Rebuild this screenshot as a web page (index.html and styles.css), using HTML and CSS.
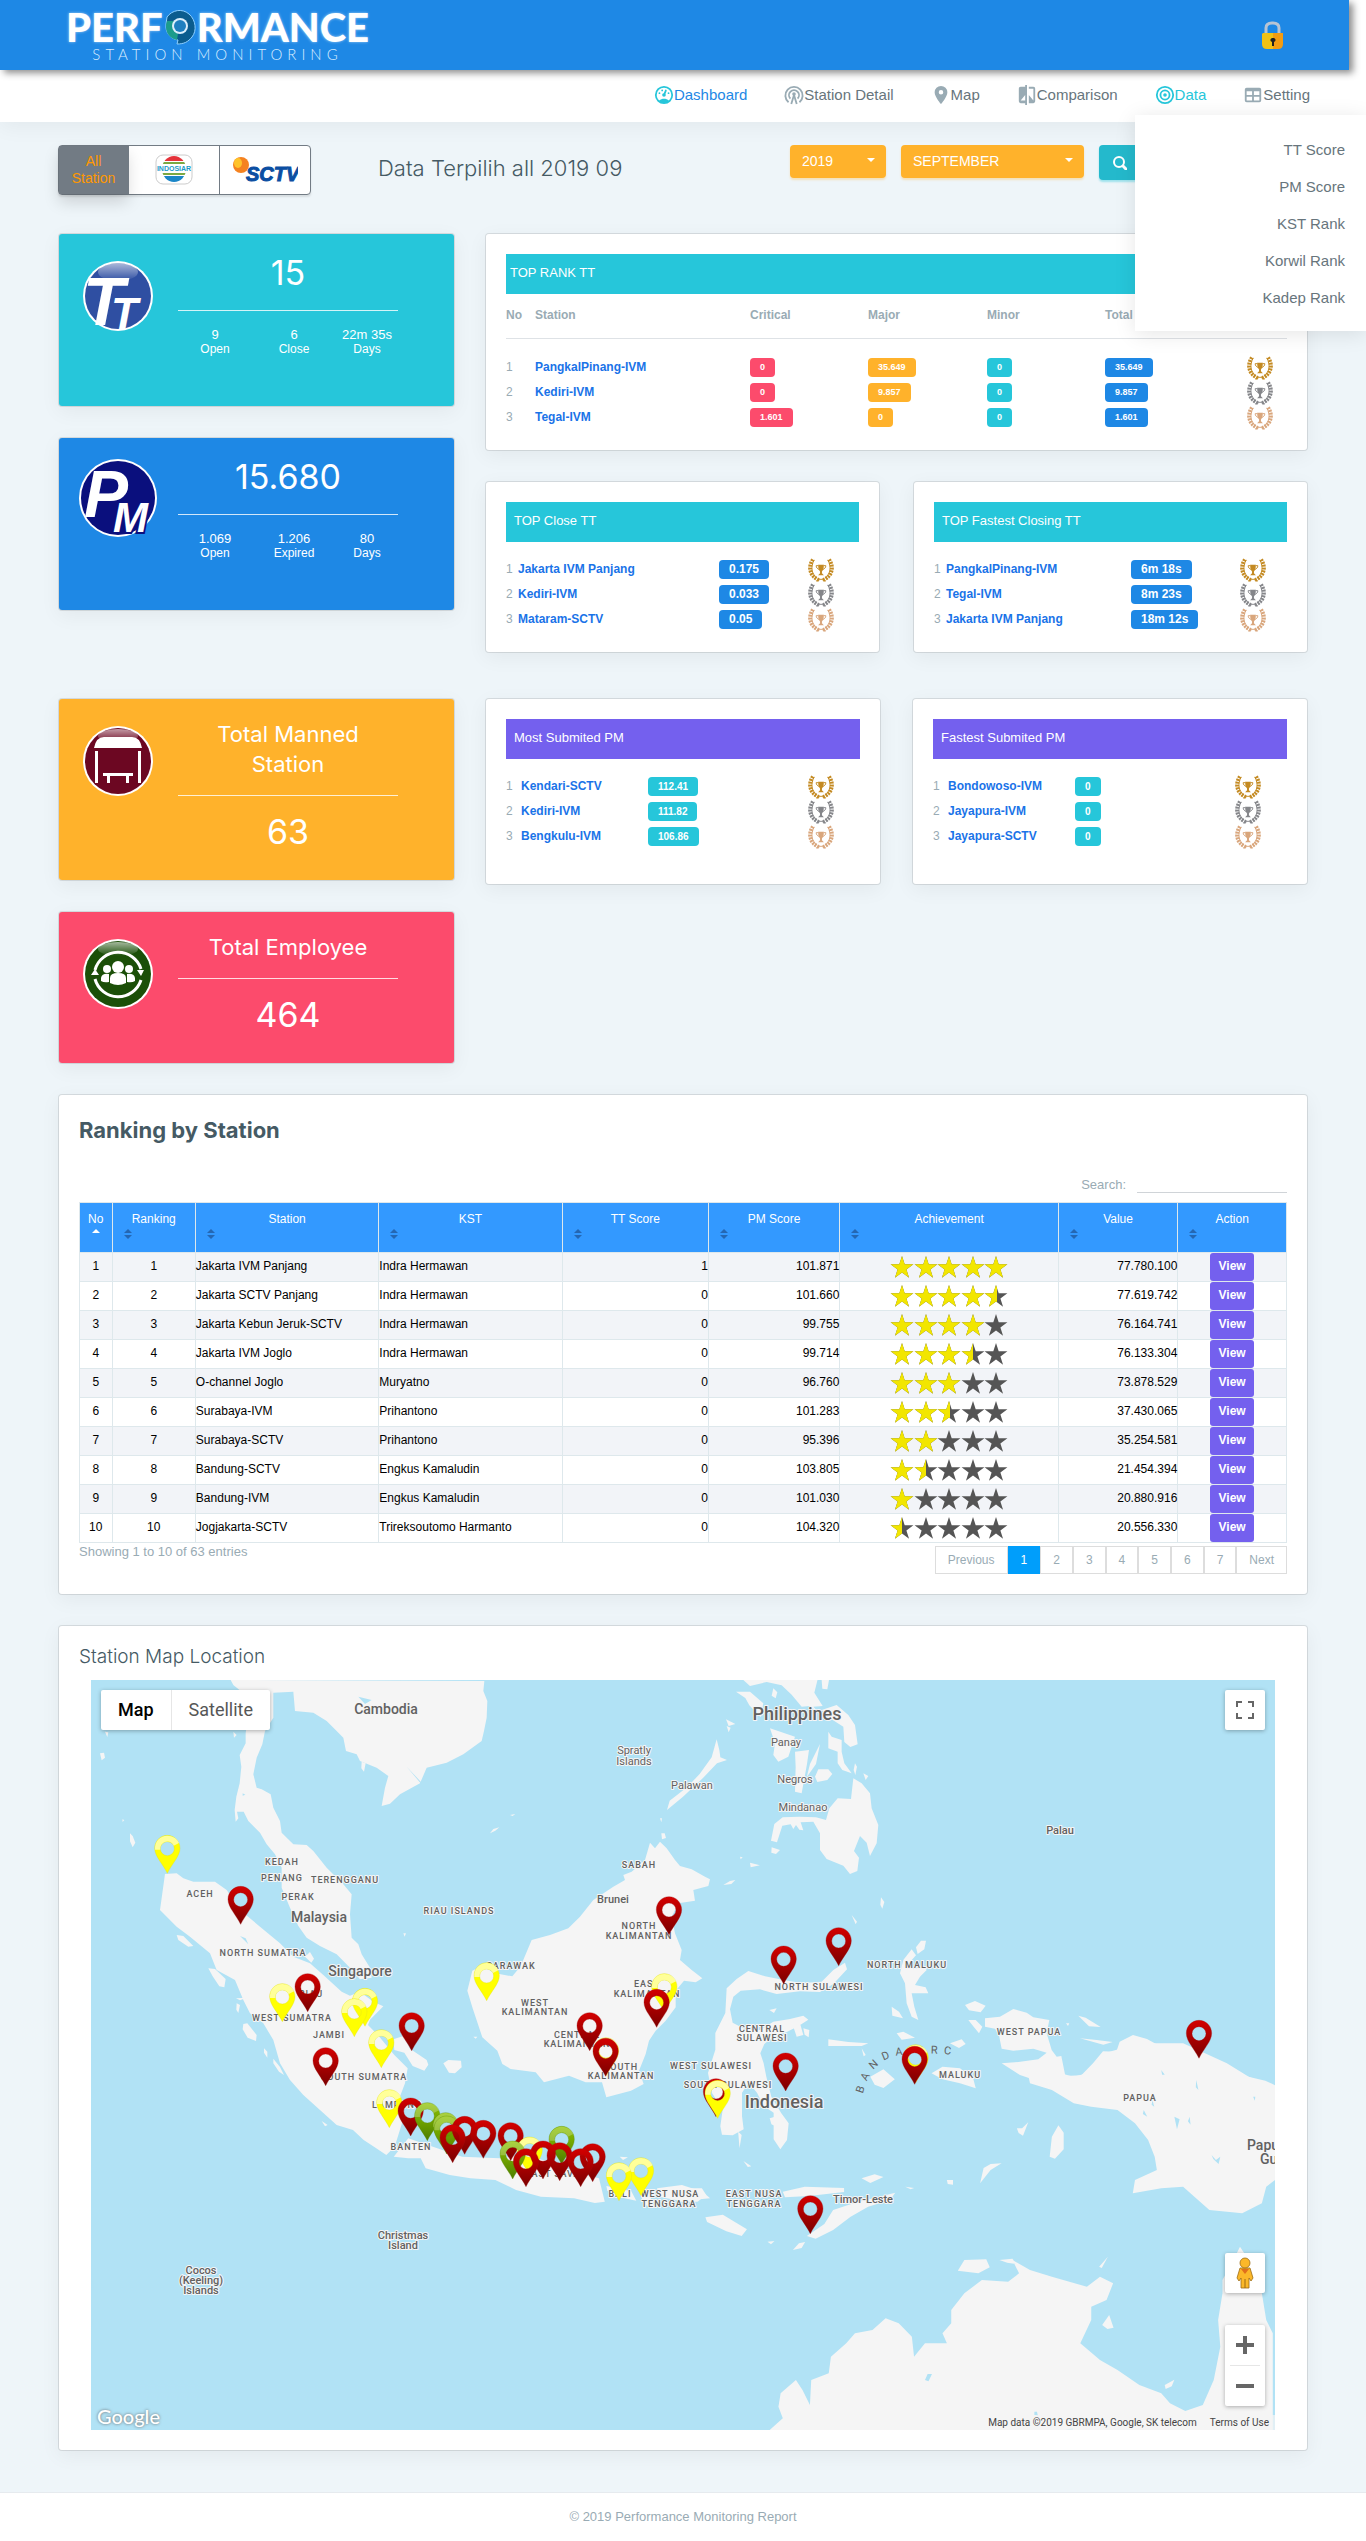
FILE: index.html
```html
<!DOCTYPE html>
<html lang="id">
<head>
<meta charset="utf-8">
<meta name="viewport" content="width=device-width, initial-scale=1">
<title>Performance Station Monitoring</title>
<link rel="stylesheet" href="styles.css">
</head>
<body>
<svg class="sprite" aria-hidden="true">
  <defs>
    <linearGradient id="pin-red-fill" x1="0" y1="0" x2="0" y2="1"><stop offset="0" stop-color="#d40000"/><stop offset="1" stop-color="#7a0000"/></linearGradient>
    <linearGradient id="pin-green-fill" x1="0" y1="0" x2="0" y2="1"><stop offset="0" stop-color="#8fc400"/><stop offset="1" stop-color="#4c7d00"/></linearGradient>
    <linearGradient id="gloss" x1="0" y1="0" x2="0" y2="1"><stop offset="0" stop-color="#fff" stop-opacity=".6"/><stop offset="1" stop-color="#fff" stop-opacity="0"/></linearGradient>
    <g id="pin-red"><path fill="url(#pin-red-fill)" fill-rule="evenodd" stroke="#a01010" d="M39 1C18 1 1 18 1 40c0 24 24 46 38 75 14-29 38-51 38-75C77 18 60 1 39 1zm0 19a21 21 0 1 1 0 42 21 21 0 0 1 0-42z"/></g>
    <g id="pin-green"><path fill="url(#pin-green-fill)" fill-rule="evenodd" stroke="#5c8a10" d="M39 1C18 1 1 18 1 40c0 24 24 46 38 75 14-29 38-51 38-75C77 18 60 1 39 1zm0 19a21 21 0 1 1 0 42 21 21 0 0 1 0-42z"/><path fill="#fff" fill-opacity=".25" d="M2 44C0 18 18 2 39 2c16 0 30 9 35 22L58 32C48 10 16 20 18 44z"/></g>
    <g id="pin-yellow"><path fill="#ff0" fill-rule="evenodd" stroke="#dede20" d="M39 1C18 1 1 18 1 40c0 24 24 46 38 75 14-29 38-51 38-75C77 18 60 1 39 1zm0 19a21 21 0 1 1 0 42 21 21 0 0 1 0-42z"/><path fill="#fff" fill-opacity=".6" d="M2 44C0 18 18 2 39 2c16 0 30 9 35 22L58 32C48 10 16 20 18 44z"/></g>
  </defs>
  <symbol id="medal" viewBox="0 0 28 26">
    <g fill="none" stroke="currentColor">
      <path stroke-width="4" stroke-dasharray="2 1" d="M12 24C2 20 0 10 6 2M16 24c10-4 12-14 6-22"/>
      <path stroke-width="1" d="M10 22C4 18 3 10 7 3M18 22c6-4 7-12 3-19M9 25l5-2 5 2"/>
      <path stroke-width="1" d="M11 9H9c0 2 1 3 3 4M17 9h2c0 2-1 3-3 4"/>
    </g>
    <path fill="currentColor" d="M11 8h6c0 4-1 6-2 7v2l2 2h-6l2-2v-2c-1-1-2-3-2-7z"/>
  </symbol>
  <symbol id="star" viewBox="-12 -12 24 22" overflow="visible"><path d="M0-12 2.700-3.700H11.400L4.400 1.400 7.050 9.700 0 4.600-7.050 9.700-4.400 1.400-11.400-3.700H-2.700z"/></symbol>
  <symbol id="stars" viewBox="0 0 118 22">
    <use href="#star" width="24" height="22"/><use href="#star" x="24" width="24" height="22"/><use href="#star" x="47" width="24" height="22"/><use href="#star" x="71" width="24" height="22"/><use href="#star" x="94" width="24" height="22"/>
  </symbol>
  <symbol id="sort" viewBox="0 0 8 10"><path d="M0 4l4-4 4 4zM0 6h8l-4 4z"/></symbol>
  <symbol id="sort-up" viewBox="0 0 8 10"><path d="M0 4l4-4 4 4z"/></symbol>
</svg>

<div class="top">
  <header class="header">
    <a class="logo" href="#">
      <span class="logo-main">PERF<svg class="logo-o" viewBox="0 0 32 36" aria-label="O"><path fill="#0b5c8e" stroke="#8fd0ff" d="M3 8C8 1 18-1 25 5c7 6 8 17 3 23-4 5-8 7-15 7l1-4C6 30 1 23 2 15z"/><path fill="#1c9c8c" d="M3 12C0 21 4 29 13 31l1-6C9 22 8 17 10 12z"/><circle cx="16" cy="17" r="8" fill="#dceffc"/><circle cx="16" cy="17" r="6" fill="#1f7fc0"/></svg>RMANCE</span>
      <span class="logo-sub">STATION MONITORING</span>
    </a>
    <button class="lock" type="button" aria-label="Lock"><svg viewBox="0 0 23 28"><path fill="none" stroke="#b8c4d4" stroke-width="3" d="M5 14V7q0-5 6-5h1q6 0 6 5v7"/><path fill="#f2c215" d="M2 12h10v16H6q-5 0-5-5V13z"/><path fill="#f39c12" d="M12 12h10v11q0 5-5 5h-5z"/><path fill="#222" d="M12 17a2 2 0 0 1 1 4v4h-2v-4a2 2 0 0 1 1-4z"/></svg></button>
  </header>
  <nav class="nav">
    <ul class="menu">
      <li><a class="is-current" href="#"><svg viewBox="1 1 22 22"><path d="M17.300,18C19,16.500 20,14.400 20,12A8,8 0 0,0 12,4A8,8 0 0,0 4,12C4,14.400 5,16.500 6.700,18C8.200,16.700 10,16 12,16C14,16 15.900,16.700 17.300,18M12,2A10,10 0 0,1 22,12A10,10 0 0,1 12,22A10,10 0 0,1 2,12A10,10 0 0,1 12,2M7,9A1,1 0 0,1 8,10A1,1 0 0,1 7,11A1,1 0 0,1 6,10A1,1 0 0,1 7,9M10,6A1,1 0 0,1 11,7A1,1 0 0,1 10,8A1,1 0 0,1 9,7A1,1 0 0,1 10,6M17,9A1,1 0 0,1 18,10A1,1 0 0,1 17,11A1,1 0 0,1 16,10A1,1 0 0,1 17,9M14.400,6.100C14.900,6.300 15.100,6.900 15,7.400L13.600,10.800C13.800,11.100 14,11.500 14,12A2,2 0 0,1 12,14A2,2 0 0,1 10,12C10,11 10.700,10.100 11.700,10L13.100,6.700C13.300,6.100 13.900,5.900 14.400,6.100Z"/></svg>Dashboard</a></li>
      <li><a href="#"><svg viewBox="1 1 22 22"><g fill="none" stroke="currentColor" stroke-width="2"><path d="M6 20a9.500 9.500 0 1 1 12 0"/><path d="M8 16a5.500 5.500 0 1 1 8 0"/><path d="M12 12L9 22M12 12l3 10"/></g><circle cx="12" cy="11" r="2"/></svg>Station Detail</a></li>
      <li><a href="#"><svg viewBox="1 1 22 22"><path d="M12,11.500A2.500,2.500 0 0,1 9.500,9A2.500,2.500 0 0,1 12,6.500A2.500,2.500 0 0,1 14.500,9A2.500,2.500 0 0,1 12,11.500M12,2A7,7 0 0,0 5,9C5,14.250 12,22 12,22C12,22 19,14.250 19,9A7,7 0 0,0 12,2Z"/></svg>Map</a></li>
      <li><a href="#"><svg viewBox="1 1 22 22"><path d="M19,3H14V5H19V18L14,12V21H19A2,2 0 0,0 21,19V5C21,3.890 20.100,3 19,3M10,18H5L10,12M10,3H5C3.890,3 3,3.890 3,5V19A2,2 0 0,0 5,21H10V23H12V1H10V3Z"/></svg>Comparison</a></li>
      <li><a class="is-open" href="#" aria-expanded="true"><svg viewBox="1 1 22 22"><g fill="none" stroke="currentColor" stroke-width="2"><circle cx="12" cy="12" r="9"/><circle cx="12" cy="12" r="5"/></g><circle cx="12" cy="12" r="2"/></svg>Data</a></li>
      <li><a href="#"><svg viewBox="1 1 22 22"><path d="M5,4H19A2,2 0 0,1 21,6V18A2,2 0 0,1 19,20H5A2,2 0 0,1 3,18V6A2,2 0 0,1 5,4M5,8V12H11V8H5M13,8V12H19V8H13M5,14V18H11V14H5M13,14V18H19V14H13Z"/></svg>Setting</a></li>
    </ul>
    <div class="dropdown">
      <a href="#">TT Score</a>
      <a href="#">PM Score</a>
      <a href="#">KST Rank</a>
      <a href="#">Korwil Rank</a>
      <a href="#">Kadep Rank</a>
    </div>
  </nav>
</div>

<main class="page">
  <form class="toolbar" onsubmit="return false">
    <div class="stations">
      <button class="station station-all" type="button">All<br>Station</button>
      <button class="station" type="button" aria-label="Indosiar">
        <svg width="38" height="32" viewBox="0 0 38 32"><rect x="1" y="1" width="36" height="29" rx="7" fill="#fff" stroke="#ccc"/><clipPath id="disc"><ellipse cx="19" cy="15" rx="12" ry="13"/></clipPath><g clip-path="url(#disc)"><path fill="#e5323a" d="M0 2h38v5H0z"/><path fill="#7ba843" d="M0 8h38v2H0zM0 19h38v2H0z"/><path fill="#1a86c8" d="M0 22h38v8H0z"/></g><path fill="#fff" d="M2 11h34v7H2z"/><text x="19" y="17" text-anchor="middle" font-size="7" font-weight="bold" fill="#1a9ac8">INDOSIAR</text></svg>
      </button>
      <button class="station" type="button" aria-label="SCTV">
        <svg width="66" height="28" viewBox="0 0 66 28"><ellipse cx="9" cy="9" rx="8" ry="8" fill="#f58220"/><ellipse cx="6" cy="7" rx="4" ry="5" fill="#ffc32b"/><text x="14" y="25" font-size="20" font-weight="bold" font-style="italic" fill="#0b4ea2" stroke="#0b4ea2">SCTV</text></svg>
      </button>
    </div>
    <h1 class="toolbar-title">Data Terpilih all 2019 09</h1>
    <div class="filters">
      <span class="picker picker-year"><select aria-label="Year"><option>2019</option></select></span>
      <span class="picker picker-month"><select aria-label="Month"><option>SEPTEMBER</option></select></span>
      <button class="search-btn" type="submit" aria-label="Search"><svg viewBox="0 0 14 14"><circle cx="6" cy="6" r="5" fill="none" stroke="#fff" stroke-width="2"/><path stroke="#fff" stroke-width="3" stroke-linecap="round" d="M10 10l3 3"/></svg></button>
    </div>
  </form>

  <section class="board board-tt">
    <div class="stack">
      <article class="stat stat-cyan">
        <svg class="stat-icon" viewBox="0 0 78 90"><circle cx="39" cy="47" r="35" fill="#fff"/><circle cx="39" cy="47" r="33" fill="#2f4fa2"/><ellipse cx="39" cy="23" rx="20" ry="9" fill="url(#gloss)"/><text x="4" y="76" font-size="68" font-weight="bold" font-style="italic" fill="#fff">T</text><text x="32" y="80" font-size="44" font-weight="bold" font-style="italic" fill="#fff">T</text></svg>
        <div class="stat-body">
          <p class="stat-value">15</p>
          <hr>
          <dl class="stat-parts"><div><dt>9</dt><dd>Open</dd></div><div><dt>6</dt><dd>Close</dd></div><div><dt>22m 35s</dt><dd>Days</dd></div></dl>
        </div>
      </article>
      <article class="stat stat-blue">
        <svg class="stat-icon" viewBox="0 0 78 90"><circle cx="39" cy="45" r="39" fill="#fff"/><circle cx="39" cy="45" r="37" fill="#0a0f7d"/><text x="5" y="64" font-size="66" font-weight="bold" font-style="italic" fill="#fff">P</text><text x="34" y="79" font-size="42" font-weight="bold" font-style="italic" fill="#fff" stroke="#0a0f7d" stroke-width="4" paint-order="stroke">M</text></svg>
        <div class="stat-body">
          <p class="stat-value">15.680</p>
          <hr>
          <dl class="stat-parts"><div><dt>1.069</dt><dd>Open</dd></div><div><dt>1.206</dt><dd>Expired</dd></div><div><dt>80</dt><dd>Days</dd></div></dl>
        </div>
      </article>
    </div>
    <div class="stack">
      <article class="card">
        <h2 class="bar bar-wide">TOP RANK TT</h2>
        <table class="rank rank-tt">
          <colgroup><col class="w29"><col class="w215"><col class="w118"><col class="w119"><col class="w118"><col class="w141"><col></colgroup>
          <thead><tr><th>No</th><th>Station</th><th>Critical</th><th>Major</th><th>Minor</th><th>Total</th><th></th></tr></thead>
          <tbody>
            <tr><td>1</td><td><a href="#">PangkalPinang-IVM</a></td><td><span class="tag red">0</span></td><td><span class="tag orange">35.649</span></td><td><span class="tag cyan">0</span></td><td><span class="tag blue">35.649</span></td><td><svg class="medal gold"><use href="#medal"/></svg></td></tr>
            <tr><td>2</td><td><a href="#">Kediri-IVM</a></td><td><span class="tag red">0</span></td><td><span class="tag orange">9.857</span></td><td><span class="tag cyan">0</span></td><td><span class="tag blue">9.857</span></td><td><svg class="medal silver"><use href="#medal"/></svg></td></tr>
            <tr><td>3</td><td><a href="#">Tegal-IVM</a></td><td><span class="tag red">1.601</span></td><td><span class="tag orange">0</span></td><td><span class="tag cyan">0</span></td><td><span class="tag blue">1.601</span></td><td><svg class="medal bronze"><use href="#medal"/></svg></td></tr>
          </tbody>
        </table>
      </article>
      <div class="pair">
        <article class="card">
          <h2 class="bar">TOP Close TT</h2>
          <table class="rank">
            <colgroup><col class="w12"><col class="w201"><col class="w88"><col></colgroup>
            <tbody>
              <tr><td>1</td><td><a href="#">Jakarta IVM Panjang</a></td><td><span class="tag big blue">0.175</span></td><td><svg class="medal gold"><use href="#medal"/></svg></td></tr>
              <tr><td>2</td><td><a href="#">Kediri-IVM</a></td><td><span class="tag big blue">0.033</span></td><td><svg class="medal silver"><use href="#medal"/></svg></td></tr>
              <tr><td>3</td><td><a href="#">Mataram-SCTV</a></td><td><span class="tag big blue">0.05</span></td><td><svg class="medal bronze"><use href="#medal"/></svg></td></tr>
            </tbody>
          </table>
        </article>
        <article class="card">
          <h2 class="bar">TOP Fastest Closing TT</h2>
          <table class="rank">
            <colgroup><col class="w12"><col class="w185"><col class="w108"><col></colgroup>
            <tbody>
              <tr><td>1</td><td><a href="#">PangkalPinang-IVM</a></td><td><span class="tag big blue">6m 18s</span></td><td><svg class="medal gold"><use href="#medal"/></svg></td></tr>
              <tr><td>2</td><td><a href="#">Tegal-IVM</a></td><td><span class="tag big blue">8m 23s</span></td><td><svg class="medal silver"><use href="#medal"/></svg></td></tr>
              <tr><td>3</td><td><a href="#">Jakarta IVM Panjang</a></td><td><span class="tag big blue">18m 12s</span></td><td><svg class="medal bronze"><use href="#medal"/></svg></td></tr>
            </tbody>
          </table>
        </article>
      </div>
    </div>
  </section>

  <section class="board board-pm">
    <div class="stack">
      <article class="stat stat-title stat-orange">
        <svg class="stat-icon" viewBox="0 0 78 90"><circle cx="39" cy="42" r="35" fill="#fff"/><circle cx="39" cy="42" r="33" fill="#6c0722"/><ellipse cx="39" cy="17" rx="20" ry="7" fill="url(#gloss)"/><path fill="#fff" d="M15 29q2-11 10-11h28q8 0 10 11zM16 32h3v32h-3zM59 32h3v32h-3zM24 54h30v3h-4v7h-3v-7H31v7h-3v-7h-4z"/></svg>
        <div class="stat-body">
          <h2>Total Manned Station</h2>
          <hr>
          <p class="stat-value">63</p>
        </div>
      </article>
      <article class="stat stat-title stat-red">
        <svg class="stat-icon" viewBox="0 0 78 90"><circle cx="39" cy="42" r="35" fill="#fff"/><circle cx="39" cy="42" r="33" fill="#1b4f08"/><ellipse cx="39" cy="17" rx="20" ry="7" fill="url(#gloss)"/><g fill="none" stroke="#fff" stroke-width="3"><path d="M16 38a24 24 0 0 1 46-1M62 48a24 24 0 0 1-46-1"/></g><g fill="#fff"><path d="M12 43l4-6 4 6zM58 38h7l-3 6z"/><circle cx="39" cy="35" r="6"/><path d="M31 51v-5q0-5 8-5t8 5v5q-8 4-16 0z"/><circle cx="28" cy="37" r="4"/><circle cx="50" cy="37" r="4"/><path d="M22 49v-3q1-5 8-4v8q-5 1-8-1zM56 49v-3q-1-5-8-4v8q5 1 8-1z"/></g></svg>
        <div class="stat-body">
          <h2>Total Employee</h2>
          <hr>
          <p class="stat-value">464</p>
        </div>
      </article>
    </div>
    <div class="pair pair-pm">
      <article class="card card-pm">
        <h2 class="bar">Most Submited PM</h2>
        <table class="rank">
          <colgroup><col class="w15"><col class="w127"><col class="w159"><col></colgroup>
          <tbody>
            <tr><td>1</td><td><a href="#">Kendari-SCTV</a></td><td><span class="tag mid cyan">112.41</span></td><td><svg class="medal gold"><use href="#medal"/></svg></td></tr>
            <tr><td>2</td><td><a href="#">Kediri-IVM</a></td><td><span class="tag mid cyan">111.82</span></td><td><svg class="medal silver"><use href="#medal"/></svg></td></tr>
            <tr><td>3</td><td><a href="#">Bengkulu-IVM</a></td><td><span class="tag mid cyan">106.86</span></td><td><svg class="medal bronze"><use href="#medal"/></svg></td></tr>
          </tbody>
        </table>
      </article>
      <article class="card card-pm">
        <h2 class="bar">Fastest Submited PM</h2>
        <table class="rank">
          <colgroup><col class="w15"><col class="w127"><col class="w159"><col></colgroup>
          <tbody>
            <tr><td>1</td><td><a href="#">Bondowoso-IVM</a></td><td><span class="tag mid cyan">0</span></td><td><svg class="medal gold"><use href="#medal"/></svg></td></tr>
            <tr><td>2</td><td><a href="#">Jayapura-IVM</a></td><td><span class="tag mid cyan">0</span></td><td><svg class="medal silver"><use href="#medal"/></svg></td></tr>
            <tr><td>3</td><td><a href="#">Jayapura-SCTV</a></td><td><span class="tag mid cyan">0</span></td><td><svg class="medal bronze"><use href="#medal"/></svg></td></tr>
          </tbody>
        </table>
      </article>
    </div>
  </section>

  <section class="card ranking">
    <h2 class="ranking-title">Ranking by Station</h2>
    <div class="table-search"><label for="table-search">Search:</label><input id="table-search" type="search"></div>
    <table class="data">
      <colgroup><col style="width:2.7%"><col style="width:6.9%"><col style="width:15.2%"><col style="width:15.2%"><col style="width:12.1%"><col style="width:10.9%"><col style="width:18.1%"><col style="width:9.9%"><col style="width:9%"></colgroup>
      <thead><tr>
        <th class="sorted">No<svg><use href="#sort-up"/></svg></th><th>Ranking<svg><use href="#sort"/></svg></th><th>Station<svg><use href="#sort"/></svg></th><th>KST<svg><use href="#sort"/></svg></th><th>TT Score<svg><use href="#sort"/></svg></th><th>PM Score<svg><use href="#sort"/></svg></th><th>Achievement<svg><use href="#sort"/></svg></th><th>Value<svg><use href="#sort"/></svg></th><th>Action<svg><use href="#sort"/></svg></th>
      </tr></thead>
      <tbody>
        <tr><td>1</td><td>1</td><td>Jakarta IVM Panjang</td><td>Indra Hermawan</td><td>1</td><td>101.871</td><td><svg class="stars"><use href="#stars"/><svg class="lit" width="118"><use href="#stars" width="118" height="22"/></svg></svg></td><td>77.780.100</td><td><button type="button">View</button></td></tr>
        <tr><td>2</td><td>2</td><td>Jakarta SCTV Panjang</td><td>Indra Hermawan</td><td>0</td><td>101.660</td><td><svg class="stars"><use href="#stars"/><svg class="lit" width="107"><use href="#stars" width="118" height="22"/></svg></svg></td><td>77.619.742</td><td><button type="button">View</button></td></tr>
        <tr><td>3</td><td>3</td><td>Jakarta Kebun Jeruk-SCTV</td><td>Indra Hermawan</td><td>0</td><td>99.755</td><td><svg class="stars"><use href="#stars"/><svg class="lit" width="95"><use href="#stars" width="118" height="22"/></svg></svg></td><td>76.164.741</td><td><button type="button">View</button></td></tr>
        <tr><td>4</td><td>4</td><td>Jakarta IVM Joglo</td><td>Indra Hermawan</td><td>0</td><td>99.714</td><td><svg class="stars"><use href="#stars"/><svg class="lit" width="83"><use href="#stars" width="118" height="22"/></svg></svg></td><td>76.133.304</td><td><button type="button">View</button></td></tr>
        <tr><td>5</td><td>5</td><td>O-channel Joglo</td><td>Muryatno</td><td>0</td><td>96.760</td><td><svg class="stars"><use href="#stars"/><svg class="lit" width="71"><use href="#stars" width="118" height="22"/></svg></svg></td><td>73.878.529</td><td><button type="button">View</button></td></tr>
        <tr><td>6</td><td>6</td><td>Surabaya-IVM</td><td>Prihantono</td><td>0</td><td>101.283</td><td><svg class="stars"><use href="#stars"/><svg class="lit" width="60"><use href="#stars" width="118" height="22"/></svg></svg></td><td>37.430.065</td><td><button type="button">View</button></td></tr>
        <tr><td>7</td><td>7</td><td>Surabaya-SCTV</td><td>Prihantono</td><td>0</td><td>95.396</td><td><svg class="stars"><use href="#stars"/><svg class="lit" width="48"><use href="#stars" width="118" height="22"/></svg></svg></td><td>35.254.581</td><td><button type="button">View</button></td></tr>
        <tr><td>8</td><td>8</td><td>Bandung-SCTV</td><td>Engkus Kamaludin</td><td>0</td><td>103.805</td><td><svg class="stars"><use href="#stars"/><svg class="lit" width="36"><use href="#stars" width="118" height="22"/></svg></svg></td><td>21.454.394</td><td><button type="button">View</button></td></tr>
        <tr><td>9</td><td>9</td><td>Bandung-IVM</td><td>Engkus Kamaludin</td><td>0</td><td>101.030</td><td><svg class="stars"><use href="#stars"/><svg class="lit" width="24"><use href="#stars" width="118" height="22"/></svg></svg></td><td>20.880.916</td><td><button type="button">View</button></td></tr>
        <tr><td>10</td><td>10</td><td>Jogjakarta-SCTV</td><td>Trireksoutomo Harmanto</td><td>0</td><td>104.320</td><td><svg class="stars"><use href="#stars"/><svg class="lit" width="12"><use href="#stars" width="118" height="22"/></svg></svg></td><td>20.556.330</td><td><button type="button">View</button></td></tr>
      </tbody>
    </table>
    <div class="table-foot">
      <p>Showing 1 to 10 of 63 entries</p>
      <div class="pages"><a href="#">Previous</a><a class="active" href="#">1</a><a href="#">2</a><a href="#">3</a><a href="#">4</a><a href="#">5</a><a href="#">6</a><a href="#">7</a><a href="#">Next</a></div>
    </div>
  </section>

  <section class="card map-card">
    <h2 class="map-title">Station Map Location</h2>
    <div class="map">
      <svg class="map-canvas" viewBox="0 0 1184 750" preserveAspectRatio="xMidYMid slice" role="img" aria-label="Station locations">
        <g transform="translate(-31 -60) scale(.33333)">
          <g class="land">
            <!-- Indochina and Malay peninsula -->
            <path d="M512 180l8 15 25 20 25 5-5 60-8 60 0 30-18 35 5 35-5 50-10 40-5 40 3 35 8-10-4-20 20 0 14 28 35 35 20 35 25 30 20 40 0 60 25 60 25 55 25 35 40 25 50 25 40 40 30 35 35-5-5-30-25-40-10-30-20-20-5-70 5-60-25-30-50-50-40-50-20-18-40-2-35-35-5-35-20-40-8-40-27-15-15-5-10-40 10-50 17-40 8-40 25-40 0-75 60-3 5 58 55 5 40 25 30 30 20 20 8 40 32 10 10 20 50 20 35 25-10 35-10 55 25-7 30-28 60-33 20-47 60-15 50-25 55-40 7-30 8-40 2-50-12-30 3-30z"/>
            <path d="M905 425l12 5-5 25-8-10zM520 335l10 10-8 8zM135 335l10 2-3 14zM120 400l12-2 3 15-10 8zM210 640l8 8 8 20-8 14-8-18zM1290 640l10-13 18-5-12 10zM1350 585l16-3-8 6zM1030 940l8 0-4 10zM187 598l6 2-5 6z"/>
            <!-- Sumatra -->
            <path d="M315 762l35-2 20 15 30 10 65 0 35 25 40 60 60 50 60 50 40 40 50 20 40 35 55 50 25 12 30-12 40 30 30 14-40 40-6 16 34 35 45 55 40 40-8 45-19 50 10 70-22 70-25 25-37-25-31-20-32-30-49-15-50-45-50-45-40-45-30-50-20-70-30-50-40-30-20-40-25-60-55-30-20-50-60-50-40-30-50-50z"/>
            <path d="M350 945l20 3 30 30-15 2-30-20zM445 1045l20 2 32 30-4 25-15-3-20-30zM550 1212l12-2 28 35-2 18-25-10-15-25zM530 1150l10 5-5 24-6-10zM528 1135l32-2-20 8zM612 1285l10 10 0 18-10-15zM640 1316l20 25 12 24-15-10-17-25zM785 1503l18 12-8 4zM735 1010l15-14 12 20-8 12zM1000 1258l30-10 20 38 50 34 5 14-12 18-35-14-25-40-30-8zM1150 1330l15-10 38 2 2 20-20 18-18-2zM1285 1215l20 0-10 15zM1240 1250l12 0-5 6z"/>
            <!-- Borneo, Philippines, Sulawesi -->
            <g transform="translate(1320 0)">
              <path d="M95 960l55-15 55-20 35-35 40-50 60-40 35-20-5-15 25-10 40-35 15-52 15 17 15-20 20 20 25 35 15 18 35 10 40 22 15 8-5 20-45 12 5 32-50 8-20 40 10 50 20 50-5 30 35 30 32 25-20 12-35-5-25 30 0 50-30 40-30 30-20 30-10 40-20 50 14 40-38 20-74 20-13-45-49 0-50-20-75 20-25-30-75-10-25-15-15-40-45-40-30-90-15-50 15-60 30-15 35 22 55 10 25-30z"/>
              <path d="M484 640l10 0 4 14-12 4zM480 595l6 0-2 12zM720 710l8 2-6 6zM750 728l30 8-28 6zM670 795l20-12 16-3-12 12zM815 682l25 8-12 12-14-4z"/>
              <path d="M730 180l20 18 50-12 45 10 30 28 30 36 25-2 30 24-20-22 28-2-25-40 10-40zM965 180l22 0-5 28-15-2zM820 205l12 12-5 18-12-8zM708 215l42 0 40 35-8 42-34-36-12-22zM678 298l28 14-20 6zM680 318l12 5-6 14zM650 358l8 32 3 22 20 8-30 10-42 44-60 56-48 40 8-28 52-40 38-40 36-50z"/>
              <path d="M965 270l45-15 35 30 20 30 8 58-22 8-18-15-3-46-40-25zM985 335l10 15 30 10 0 35 8 35 22 30-28-10-14-20 0-35-28-10zM810 325l75 25-20 60-30 15-15-20 5-35zM885 395l42-5-6 42-16 88-20-5 2-75zM960 372l-12 60-28 40 10-40zM945 470l10-22 30 0 12 14-15 18-30 6zM1065 430l6 10-5 25-5-15zM1090 460l15 8-8 12z"/>
              <path d="M1060 475l25 15 25 30 5 45 20 50-5 55-20 38-10-40-20-20-18 45 15 20-5 40-22 9-20-25-50-20-20-27 0-50-20-35-38 2 8 24-12-2-10-14-8 12-8-14-25 4-16 50-18-5 10-50 25-20 50-2 50 2 30 8 10-35 25-30 40 2z"/>
              <path d="M680 1105l30-28 35-24 50 16 60 12 50 8 60-4 35-35 35-22 6 20-41 44-40 24-60-2-70 8-50-14-58 4-22 18-10 38 8 40 42 22 40 0 40-25 50-8 40-10 15 12-28 18-38 20-36 10-30 25-12 28 10 30 8 40 15 60 30 50 22 30-5 50-20 28-20-30 0-80-30-20-20-40-25-30-20 30 0 70 5 40-33 18-32-2-5-25 7-50-32-50-12-60 22-70 0-50 30-60zM880 1220l20-10 10 35-20 5zM910 1225l18 5-2 22-12-8zM985 1258l60 8 60 4-20 8-100 0zM808 1170l22-5-8 14zM1085 1285l12 20-6 4zM1143 832l10 14-6 20-6-12zM1055 885l16 20-4 8z"/>
              <path d="M1278 962l-5 26-20 14-5-20 15-20zM1235 988l-25 32-10 40 15 30 5 60 15 40 20 10-12-40-8-40 50 0-8-18-32-7 15-25 20-20-8-12-32 10-12-20 20-22zM1190 1240l20-5 35 18-40 6zM1175 1160l22 15 12 20-32-8z"/>
            </g>
            <!-- Papua, north coast -->
            <g transform="translate(2520 0)">
              <path d="M255 1195l45-5 40-23 40 11 20 14 48 8-8 40 15 50 15 20 14-2 12 60 48-2 35-36 30-36 40 1 10-30 40-20 42 12 60 33 50 22 80 18 70 30 95 22 30 14v30H600L480 1395l-60-10-60-20-55-35 50-4 60-8 25-20-40-12-60 6-35-6-8-40-12-20-30-6zM195 1155l30-12 32 14-15 20-35-6zM205 1200l22 0 20 20-10 20-16-20zM150 1270l35-12 12 14-20 12zM535 1187l22 6 45 28-35-2zM540 1255l50 5 48 6-28 8zM498 1210l10 0-4 8z"/>
            </g>
            <!-- Java and Lesser Sundas -->
            <g transform="translate(0 1320) scale(1.2438 1)">
              <path d="M805 290l35-55 70 30 60 25 90 5 60-10 60 20 60 30 60 20 14 70-24 4-50-14-80-5-60-20-50-30-60-5-50-10-58-20-12-30-30 0zM1318 378l60 16 12 28-40-10-30-20zM1350 290l20 2-12 8zM1440 385l60-10 50 20 18 20-70 8-50-12zM1400 405l25-5 0 40-15-5z"/>
            </g>
            <!-- Timor, Arafura Sea, south Papua, Australia -->
            <g transform="translate(1860 1320) scale(1.3125 1)">
              <path d="M575 40l25-20 40 5 30 30 6 30-36-15-40-12zM435 50l30-22 26 30-26 26-20-10zM845 290l5-60 15-34 12 22 0 50-20 28zM735 310l-25 20-24 40 8-46 16-12zM770 205l12 0 14-18-12 40-10-8zM415 355l30-12 20 8-30 18zM610 360l14 0 0 14-12-2zM58 472l40-8 55 44-12 20-35-14-44-28zM200 545l16-2-8 10zM258 570l14-20 14-4-8 18zM290 528l40-36 20-42 50-22 92-30-12 22-50 20-40 30-40 40-40 26zM235 395l50-15 90 4 0 12-80 12-55 4zM0 385l50 0 10 20-20 20-40 0zM515 380l20 4-8 4zM205 175l12-5 0 28-8-5zM133 215l8 10-5 40zM145 303l18 16-8 2z"/>
              <path d="M790 10l40 10 30-10 10 30 30 10 30-10 40-60 80-30 100 0 100 60 50 40 60 35v275l-20 20-10 50-45 30-75-10-60-70-50 5-65 15 5-40 50-30-5-40-15-50-30-50-40-40-60-10-40-10-50-40-50-20z"/>
              <path d="M205 1110l30-35-10-35 5-40 35-40 15 30 17 45 3-75 40-20 5-50 35-40 20-30 40-10 30-35 30 15 30 40 5 60 25-40 50 0-10-30 20-30 0-40 30-50 40-40 60 5 25-25-15-40 40 30 50 20 40 15 40 15 30-30 30 20-15 50-35 20 0 40-25 70 45 50 40 30 50 45 50 25 20 30 35 23 40-18 25-75 15-100-5-80 10-80 0-40 25-60 15-40 20 40 30 100 10 80 15 40v290zM635 632l15-32 50-2 8 24-26 18zM730 600l30-4 8 16-20-4zM965 795l16-30 10 38-14 4zM1108 975l22-16-6 20-14 8zM958 620l20-30-14 34z"/>
            </g>
          </g>
          <g class="lake">
            <path d="M895 230l40 10-20 12zM540 948l25 25-8-18zM1040 440l45 48-3 2zM548 520l8 4-8 3z"/>
            <g transform="translate(1860 1320) scale(1.3125 1)"><path d="M560 960l6-18 10 0-8 22zM1215 285l10 15 10-10-4 22-12-15zM810 1055l6 0 2 12-8-2zM880 1110l18-6 0 6zM1060 150l8 20-10-8zM1165 170l2 24-6-10zM1080 120l4 20-6-6zM1130 170l12 8-6 30zM1100 30l8 14-6 0zM1180 60l5 30-6-8zM1310 110l5 0-1 12z"/></g>
          </g>
        </g>
        <path id="banda" fill="none" d="M772 414Q780 378 812 375T872 376"/>
        <g class="label sea"><text><textPath href="#banda">BANDA ARC</textPath></text></g>
        <g class="label country"><text x="295" y="34">Cambodia</text><text x="228" y="242">Malaysia</text><text x="269" y="296">Singapore</text><text class="start" x="1156" y="470">Papua New</text><text class="start" x="1169" y="484">Guinea</text></g>
        <g class="label nation"><text x="706" y="40">Philippines</text><text x="693" y="428">Indonesia</text></g>
        <g class="label place"><text x="543" y="74">Spratly</text><text x="543" y="85">Islands</text><text x="601" y="109">Palawan</text><text x="695" y="66">Panay</text><text x="704" y="103">Negros</text><text x="712" y="131">Mindanao</text></g>
        <g class="label small"><text x="522" y="223">Brunei</text><text x="969" y="154">Palau</text><text x="772" y="523">Timor-Leste</text><text x="312" y="559">Christmas</text><text x="312" y="569">Island</text><text x="110" y="594">Cocos</text><text x="110" y="604">(Keeling)</text><text x="110" y="614">Islands</text></g>
        <g class="label region"><text x="109" y="217">ACEH</text><text x="191" y="185">KEDAH</text><text x="191" y="201">PENANG</text><text x="254" y="203">TERENGGANU</text><text x="207" y="220">PERAK</text><text x="368" y="234">RIAU ISLANDS</text><text x="172" y="276">NORTH SUMATRA</text><text x="220" y="317">RIAU</text><text x="201" y="341">WEST SUMATRA</text><text x="238" y="358">JAMBI</text><text x="273" y="400">SOUTH SUMATRA</text><text x="306" y="428">LAMPUNG</text><text x="320" y="470">BANTEN</text><text x="462" y="497">EAST JAVA</text><text x="529" y="517">BALI</text><text x="579" y="517">WEST NUSA</text><text x="578" y="527">TENGGARA</text><text x="663" y="517">EAST NUSA</text><text x="663" y="527">TENGGARA</text><text x="548" y="188">SABAH</text><text x="548" y="249">NORTH</text><text x="548" y="259">KALIMANTAN</text><text x="420" y="289">SARAWAK</text><text x="444" y="326">WEST</text><text x="444" y="335">KALIMANTAN</text><text x="556" y="307">EAST</text><text x="556" y="317">KALIMANTAN</text><text x="486" y="358">CENTRAL</text><text x="486" y="367">KALIMANTAN</text><text x="530" y="390">SOUTH</text><text x="530" y="399">KALIMANTAN</text><text x="671" y="352">CENTRAL</text><text x="671" y="361">SULAWESI</text><text x="620" y="389">WEST SULAWESI</text><text x="637" y="408">SOUTH SULAWESI</text><text x="728" y="310">NORTH SULAWESI</text><text x="816" y="288">NORTH MALUKU</text><text x="869" y="398">MALUKU</text><text x="938" y="355">WEST PAPUA</text><text x="1049" y="421">PAPUA</text></g>
        <g transform="translate(-31 -60) scale(.33333) translate(-39 0)">
          <use href="#pin-yellow" x="322" y="645"/><use href="#pin-red" x="542" y="798"/><use href="#pin-red" x="1827" y="829"/><use href="#pin-red" x="2336" y="922"/><use href="#pin-red" x="2171" y="977"/><use href="#pin-yellow" x="1280" y="1027"/><use href="#pin-red" x="743" y="1060"/><use href="#pin-yellow" x="1813" y="1060"/><use href="#pin-yellow" x="667" y="1090"/><use href="#pin-yellow" x="915" y="1104"/><use href="#pin-red" x="1790" y="1107"/><use href="#pin-yellow" x="883" y="1135"/><use href="#pin-red" x="1055" y="1177"/><use href="#pin-red" x="1589" y="1177"/><use href="#pin-red" x="3417" y="1200"/><use href="#pin-yellow" x="964" y="1228"/><use href="#pin-yellow" x="1638" y="1252"/><use href="#pin-red" x="1637" y="1254"/><use href="#pin-yellow" x="2567" y="1273"/><use href="#pin-red" x="2564" y="1278"/><use href="#pin-red" x="797" y="1282"/><use href="#pin-red" x="2177" y="1298"/><use href="#pin-red" x="1968" y="1375"/><use href="#pin-yellow" x="1973" y="1380"/><use href="#pin-yellow" x="988" y="1408"/><use href="#pin-red" x="1052" y="1433"/><use href="#pin-green" x="1102" y="1447"/><use href="#pin-green" x="1157" y="1477"/><use href="#pin-green" x="1160" y="1487"/><use href="#pin-red" x="1214" y="1488"/><use href="#pin-red" x="1270" y="1500"/><use href="#pin-red" x="1352" y="1507"/><use href="#pin-red" x="1178" y="1513"/><use href="#pin-green" x="1505" y="1518"/><use href="#pin-yellow" x="1409" y="1550"/><use href="#pin-green" x="1358" y="1562"/><use href="#pin-red" x="1449" y="1562"/><use href="#pin-red" x="1499" y="1567"/><use href="#pin-red" x="1598" y="1570"/><use href="#pin-red" x="1398" y="1585"/><use href="#pin-red" x="1562" y="1585"/><use href="#pin-yellow" x="1743" y="1612"/><use href="#pin-yellow" x="1677" y="1627"/><use href="#pin-red" x="2251" y="1726"/>
        </g>
      </svg>
      <div class="map-type"><button class="on" type="button">Map</button><button type="button">Satellite</button></div>
      <button class="map-btn map-full" type="button" aria-label="Fullscreen"><svg width="18" height="18" viewBox="0 0 18 18"><path fill="none" stroke="#666" stroke-width="2" d="M1 6V1h5M12 1h5v5M17 12v5h-5M6 17H1v-5"/></svg></button>
      <button class="map-btn map-man" type="button" aria-label="Street view"><svg width="18" height="32" viewBox="0 0 18 32"><g fill="#fbb829" stroke="#9c6b14" stroke-width=".8"><path d="M4 11h10l3 10-2 3-2-3v10H5V21l-2 3-2-3z"/><circle cx="9" cy="6" r="5"/></g><path fill="#e0701c" d="M5 12h8l-4 5z"/><path stroke="#9c6b14" d="M9 22v9"/></svg></button>
      <div class="map-zoom"><button type="button" aria-label="Zoom in"><svg width="18" height="18"><path stroke="#666" stroke-width="4" d="M0 9h18M9 0v18"/></svg></button><button type="button" aria-label="Zoom out"><svg width="18" height="18"><path stroke="#666" stroke-width="4" d="M0 9h18"/></svg></button></div>
      <a class="map-brand" href="#">Google</a>
      <p class="map-credit"><span>Map data ©2019 GBRMPA, Google, SK telecom</span><a href="#">Terms of Use</a></p>
    </div>
  </section>
</main>
<footer class="footer">© 2019 Performance Monitoring Report</footer>
</body>
</html>
```
FILE: styles.css
```css
* { box-sizing: border-box; }

body {
  margin: 0;
  background: #eef5f9;
  color: #67757c;
  font: 12px/15px "Liberation Sans", Arial, sans-serif;
}

h1, h2, p, dl, dd, ul { margin: 0; padding: 0; }
a { color: inherit; text-decoration: none; }
button, input, select { font: inherit; color: inherit; border: 0; margin: 0; padding: 0; background: none; }
.sprite { position: absolute; width: 0; height: 0; }
svg { display: block; }

/* Header and navigation */
.top { background: #fff; position: relative; z-index: 5; box-shadow: 0 5px 20px rgba(0, 0, 0, .05); }
.header {
  display: flex; justify-content: space-between; align-items: center;
  height: 70px; margin-right: 17px; padding: 0 65px 0 66px;
  background: #1e88e5; box-shadow: 4px 3px 7px rgba(0, 0, 0, .45);
}
.logo { display: flex; flex-direction: column; align-items: center; color: #fff; font-family: Lato, sans-serif; }
.logo-main { display: flex; align-items: center; height: 38px; font-size: 40px; font-weight: 900; line-height: 38px; text-shadow: 0 0 3px rgba(255, 255, 255, .6); }
.logo-o { width: 32px; height: 36px; margin: 0 1px; }
.logo-sub { font-size: 15px; line-height: 16px; font-weight: 300; letter-spacing: 5px; color: #d8ecff; }
.lock { width: 23px; height: 28px; }
.nav { position: relative; height: 52px; padding: 0 56px; }
.menu { display: flex; justify-content: flex-end; gap: 37px; list-style: none; }
.menu a { display: flex; align-items: center; height: 49px; font-size: 15px; }
.menu svg { width: 20px; height: 20px; color: #99abb4; fill: #99abb4; }
.menu .is-current { color: #1e88e5; }
.menu .is-open { color: #26c6da; }
.menu .is-current svg, .menu .is-open svg { color: #26c6da; fill: #26c6da; }
.dropdown {
  position: absolute; top: 45px; right: 0; width: 231px;
  padding: 16px 21px 15px; background: #fff; text-align: right;
  box-shadow: 0 3px 20px rgba(0, 0, 0, .1);
}
.dropdown a { display: block; font-size: 15px; line-height: 37px; }

/* Toolbar */
.page { padding: 23px 58px 0; }
.toolbar { display: flex; align-items: flex-start; margin-bottom: 38px; }
.stations { display: flex; height: 50px; border: 1px solid #727b84; border-radius: 4px; background: #fff; box-shadow: 0 2px 2px rgba(0, 0, 0, .1); }
.station { display: flex; align-items: center; justify-content: center; width: 91px; }
.station + .station { border-left: 1px solid #727b84; }
.station.station-all { width: 69px; background: #727b84; color: #ff9800; font-size: 14px; line-height: 17px; box-shadow: 0 8px 16px rgba(0, 0, 0, .15); }
.toolbar-title { padding-left: 67px; font: 300 22px/46px Inter, sans-serif; color: #455a64; }
.filters { display: flex; gap: 15px; margin-left: auto; margin-right: 167px; }
.picker { position: relative; height: 33px; background: #ffb22b; border-radius: 4px; box-shadow: 0 2px 2px rgba(255, 178, 43, .3); }
.picker::after { content: ""; position: absolute; right: 11px; top: 13px; border: 4px solid transparent; border-top-color: #fff; pointer-events: none; }
.picker select { width: 100%; height: 33px; padding: 0 12px; appearance: none; color: #fff; font-size: 14px; }
.picker-year { width: 96px; }
.picker-month { width: 183px; }
.search-btn { display: flex; align-items: center; justify-content: center; width: 42px; height: 35px; border-radius: 4px; background: #24b9cc; box-shadow: 0 2px 2px rgba(38, 198, 218, .4); }
.search-btn svg { width: 14px; height: 14px; }

/* Board layout */
.board { display: grid; grid-template-columns: minmax(0, 397fr) minmax(0, 823fr); gap: 30px; align-items: start; }
.board-tt { margin-bottom: 45px; }
.board-pm { margin-bottom: 30px; }
.stack { display: flex; flex-direction: column; gap: 30px; }
.pair { display: grid; grid-template-columns: repeat(2, minmax(0, 1fr)); gap: 33px; }
.pair-pm { gap: 31px; }
.card, .stat { border: 1px solid rgba(0, 0, 0, .1); border-radius: 4px; box-shadow: 0 5px 20px rgba(0, 0, 0, .05); background-clip: padding-box; }
.card { background-color: #fff; padding: 20px; }
.card-pm { padding-bottom: 35px; }

/* Statistic cards */
.stat { display: flex; gap: 21px; min-height: 174px; padding: 15px 56px 15px 20px; color: #fff; text-align: center; }
.stat-title { min-height: 0; padding-top: 20px; padding-bottom: 24px; }
.stat-icon { flex: none; width: 78px; height: 90px; }
.stat-body { flex: 1; }
.stat hr { height: 1px; margin: 13px 0 16px; border: 0; background: rgba(255, 255, 255, .8); }
.stat-title hr { margin: 16px 0 12px; }
.stat h2 { padding: 0 20px; font: 400 22px/30px Inter, sans-serif; }
.stat-value { font: 400 34px/48px Inter, sans-serif; }
.stat-parts { display: grid; grid-template-columns: 74fr 84fr 62fr; }
.stat-parts dt { font-size: 13px; white-space: nowrap; }
.stat-cyan { background-color: #26c6da; }
.stat-blue { background-color: #1e88e5; }
.stat-orange { background-color: #ffb22b; }
.stat-red { background-color: #fc4b6c; }

/* Top-three tables */
.bar { height: 40px; margin-bottom: 15px; padding: 0 8px; background: #26c6da; color: #fff; font-size: 13px; font-weight: 400; line-height: 38px; }
.bar-wide { margin-bottom: 0; padding: 0 4px; }
.card-pm .bar { background: #7460ee; }
.rank { width: 100%; table-layout: fixed; border-collapse: collapse; }
.rank td { height: 25px; padding: 0; color: #99abb4; white-space: nowrap; }
.rank th { height: 44px; padding: 0; text-align: left; color: #99abb4; border-bottom: 1px solid #dee2e6; }
.rank-tt tbody::before { content: ""; display: block; height: 16px; }
.rank a { color: #1a73e8; font-weight: 700; }
.w12 { width: 12px; } .w15 { width: 15px; } .w29 { width: 29px; } .w88 { width: 88px; }
.w108 { width: 108px; } .w118 { width: 118px; } .w119 { width: 119px; } .w127 { width: 127px; }
.w141 { width: 141px; } .w159 { width: 159px; } .w185 { width: 185px; } .w201 { width: 201px; } .w215 { width: 215px; }
.tag { display: inline-block; padding: 0 10px; border-radius: 4px; color: #fff; font-size: 9px; font-weight: 700; line-height: 19px; vertical-align: middle; }
.tag.mid { font-size: 10px; }
.tag.big { font-size: 12px; }
.red { background: #fc4b6c; }
.orange { background: #ffb22b; }
.cyan { background: #26c6da; }
.blue { background: #1e88e5; }
.medal { width: 28px; height: 25px; }
.gold { color: #c48a22; }
.silver { color: #85868a; }
.bronze { color: #d9a67c; }

/* Ranking table */
.ranking { margin-bottom: 30px; }
.ranking-title { font: 700 22px/30px Inter, sans-serif; color: #455a64; }
.table-search { display: flex; justify-content: flex-end; gap: 11px; margin: 31px 0 9px; font-size: 13px; line-height: 17px; color: #99abb4; }
.table-search input { width: 150px; height: 17px; border-bottom: 1px solid #d0d4d8; appearance: none; }
.data { width: 100%; table-layout: fixed; border-collapse: collapse; color: #000; }
.data th, .data td { border: 1px solid #dee8ec; }
.data th { height: 50px; padding: 9px 0 0; vertical-align: top; background: #39f; color: #fff; font-weight: 400; }
.data th svg { width: 8px; height: 10px; margin: 2px 0 0 11px; fill: #2467b3; }
.data th.sorted svg { margin: 2px auto 0; fill: #fff; }
.data tbody tr { height: 29px; }
.data tbody tr:nth-child(odd) { background: #f2f4f8; }
.data td { padding: 0; text-align: right; }
.data td:nth-child(-n+2), .data td:nth-child(9) { text-align: center; }
.data td:nth-child(3), .data td:nth-child(4) { text-align: left; }
.data button { display: block; width: 44px; height: 28px; margin: 0 auto; border-radius: 3px; background: #7460ee; color: #fff; font-weight: 700; }
.stars { width: 118px; height: 22px; margin: 0 auto; fill: #555; }
.lit { height: 22px; fill: #f2e600; overflow: hidden; }
.table-foot { display: flex; justify-content: space-between; color: #99abb4; font-size: 13px; line-height: 17px; }
.pages { display: flex; padding-top: 3px; font-size: 12px; line-height: 26px; }
.pages a { padding: 0 12px; border: 1px solid #ddd; }
.pages .active { background: #009efb; border-color: #009efb; color: #fff; }

/* Map */
.map-title { margin-bottom: 12px; font: 300 19px/22px Inter, sans-serif; color: #455a64; }
.map { position: relative; height: 750px; margin: 0 12px; overflow: hidden; background: #b1e2f5; font-family: Roboto, sans-serif; }
.map-canvas { width: 100%; height: 100%; }
.land { fill: #f5f5f5; }
.lake { fill: #b1e2f5; }
.label { fill: #616161; stroke: #f5f5f5; stroke-width: 2px; paint-order: stroke; stroke-linejoin: round; text-anchor: middle; }
.country { font-size: 14px; font-weight: 500; }
.nation { font-size: 18px; font-weight: 500; }
.place { font-size: 11px; }
.small { font-size: 11px; font-weight: 500; }
.region { font-size: 9px; font-weight: 500; letter-spacing: 1px; }
.sea { font-size: 11px; letter-spacing: 6px; text-anchor: start; stroke: none; }
.start { text-anchor: start; }
.map-type { position: absolute; left: 10px; top: 10px; display: flex; height: 40px; background: #fff; border-radius: 2px; box-shadow: 0 1px 4px rgba(0, 0, 0, .3); font-size: 18px; color: #565656; }
.map-type button { padding: 0 17px; }
.map-type button + button { border-left: 1px solid #e6e6e6; }
.map-type .on { color: #000; font-weight: 500; }
.map-btn, .map-zoom { position: absolute; right: 10px; width: 40px; background: #fff; border-radius: 2px; box-shadow: 0 1px 4px rgba(0, 0, 0, .3); }
.map-btn { display: flex; align-items: center; justify-content: center; height: 40px; }
.map-full { top: 10px; }
.map-man { bottom: 137px; }
.map-zoom { bottom: 24px; padding: 0 5px; }
.map-zoom button { display: flex; align-items: center; justify-content: center; width: 30px; height: 40px; }
.map-zoom button + button { border-top: 1px solid #e6e6e6; height: 41px; }
.map-brand { position: absolute; left: 6px; bottom: 2px; color: #fff; font: 500 20px/24px Lato, sans-serif; text-shadow: 0 0 3px #666; }
.map-credit { position: absolute; right: 0; bottom: 0; display: flex; gap: 13px; padding: 0 6px; background: rgba(245, 245, 245, .7); color: #444; font-size: 10px; }

.footer { margin-top: 41px; background: #fff; border-top: 1px solid #e6ebee; color: #99abb4; font-size: 13px; line-height: 48px; text-align: center; }
```
